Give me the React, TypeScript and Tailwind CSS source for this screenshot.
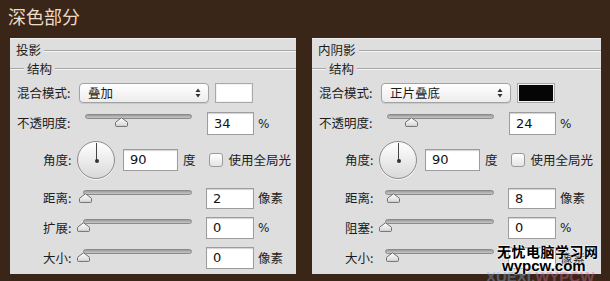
import React from "react";

const CJK = "font-['Noto_Sans_CJK_SC',sans-serif]";
const NUM = "font-['DejaVu_Sans',sans-serif]";

function Thumb() {
  return (
    <svg width="13" height="10" viewBox="0 0 13 10">
      <defs>
        <linearGradient id="tg" x1="0" y1="0" x2="0" y2="1">
          <stop offset="0" stopColor="#ffffff" />
          <stop offset="1" stopColor="#d6d6d6" />
        </linearGradient>
      </defs>
      <path
        d="M6.5 0.8 L12.2 5 Q12.5 5.3 12.5 5.8 L12.5 8.6 Q12.5 9.4 11.7 9.4 L1.3 9.4 Q0.5 9.4 0.5 8.6 L0.5 5.8 Q0.5 5.3 0.8 5 Z"
        fill="url(#tg)"
        stroke="#6f6f6f"
        strokeWidth="1"
      />
    </svg>
  );
}

function Slider({ w, offset }: { w: number; offset: number }) {
  return (
    <div className="relative h-[14px] self-start mt-[1px]" style={{ width: w }}>
      <div className="absolute left-0 right-0 top-[1px] h-[5px] rounded-full border border-[#8a8a8a] bg-[linear-gradient(#9a9a9a,#c8c8c8)]" />
      <div className="absolute top-[4px]" style={{ left: offset - 6.5 }}>
        <Thumb />
      </div>
    </div>
  );
}

function Input({ value, cls }: { value: string; cls: string }) {
  return (
    <div
      className={`${cls} flex items-center border border-[#9d9d9d] bg-white pl-[6px] text-[13px] text-[#111] shadow-[inset_0_1px_1px_rgba(0,0,0,0.18)] ${NUM}`}
    >
      {value}
    </div>
  );
}

function Dial() {
  return (
    <div className="relative h-[38px] w-[38px] rounded-full border border-[#8c8c8c] bg-[linear-gradient(#ffffff,#d9d9d9)] shadow-[0_1px_0_rgba(255,255,255,0.8)]">
      <div className="absolute left-[18px] top-[1px] h-[18px] w-[1px] bg-[#444]" />
      <div className="absolute left-[16.5px] top-[16.5px] h-[4px] w-[4px] rounded-full bg-[#333]" />
    </div>
  );
}

function Header({ title }: { title: string }) {
  return (
    <div className="flex h-[22px] items-center pl-[6px] pt-[1px]">
      <span className={`text-[12.5px] leading-none text-[#1c1c1c] ${CJK}`}>{title}</span>
      <div className="ml-[3px] flex-1 border-t border-b border-t-[#a6a6a6] border-b-[#f4f4f4]" />
    </div>
  );
}

function SubHeader() {
  return (
    <div className="flex h-[16px] items-center">
      <div className="w-[14px] border-t border-b border-t-[#a6a6a6] border-b-[#f4f4f4]" />
      <span className={`ml-[3px] text-[12.5px] leading-none text-[#1c1c1c] ${CJK}`}>结构</span>
      <div className="ml-[3px] flex-1 border-t border-b border-t-[#a6a6a6] border-b-[#f4f4f4]" />
    </div>
  );
}

type PanelProps = {
  width: string;
  title: string;
  mode: string;
  swatch: string;
  opacity: string;
  opacityOffset: number;
  distance: string;
  distanceOffset: number;
  secondLabel: string;
  second: string;
  secondOffset: number;
  size: string;
  sizeOffset: number;
};

function Panel(p: PanelProps) {
  const label = `text-[12.5px] leading-none text-[#1c1c1c] ${CJK}`;
  return (
    <div className={`${p.width} h-[236px] shrink-0 bg-[#dedede] border-t border-t-[#efefef]`}>
      <Header title={p.title} />
      <SubHeader />
      {/* mode */}
      <div className="mt-[6px] flex h-[20px] items-center">
        <div className={`w-[69px] pl-[7px] ${label}`}>混合模式:</div>
        <div className="flex h-[20px] w-[130px] items-center justify-between rounded-[4px] border border-[#a2a2a2] bg-[linear-gradient(#ffffff,#ececec)] pl-[8px] pr-[7px] shadow-[0_1px_1px_rgba(0,0,0,0.1)]">
          <span className={label}>{p.mode}</span>
          <svg width="6" height="10" viewBox="0 0 6 10">
            <path d="M3 0.5 L5.5 4 L0.5 4 Z" fill="#333" />
            <path d="M3 9.5 L5.5 6 L0.5 6 Z" fill="#333" />
          </svg>
        </div>
        <div className="ml-[6px] h-[20px] w-[38px] border border-[#a9a9a9] bg-[#f2f2f2] p-[1px]">
          <div className={`h-full w-full ${p.swatch}`} />
        </div>
      </div>
      {/* opacity */}
      <div className="mt-[9px] flex h-[23px] items-center">
        <div className={`w-[75px] pl-[7px] ${label}`}>不透明度:</div>
        <Slider w={107} offset={p.opacityOffset} />
        <Input value={p.opacity} cls="ml-[15px] h-[23px] w-[47px]" />
        <span className={`ml-[4px] text-[12px] text-[#1c1c1c] ${NUM}`}>%</span>
      </div>
      {/* angle */}
      <div className="mt-[6px] flex h-[38px] items-center">
        <div className={`w-[67px] pl-[33px] ${label}`}>角度:</div>
        <Dial />
        <Input value="90" cls="ml-[8px] h-[22px] w-[55px]" />
        <span className={`ml-[5px] ${label}`}>度</span>
        <div className="ml-[13px] h-[14px] w-[14px] rounded-[3px] border border-[#9a9a9a] bg-[linear-gradient(#ffffff,#e4e4e4)]" />
        <span className={`ml-[6px] ${label}`}>使用全局光</span>
      </div>
      {/* distance */}
      <div className="mt-[9px] flex h-[21px] items-center">
        <div className={`w-[73px] pl-[33px] ${label}`}>距离:</div>
        <Slider w={109} offset={p.distanceOffset} />
        <Input value={p.distance} cls="ml-[14px] h-[21px] w-[48px]" />
        <span className={`ml-[4px] ${label}`}>像素</span>
      </div>
      {/* spread / choke */}
      <div className="mt-[8px] flex h-[22px] items-center">
        <div className={`w-[73px] pl-[33px] ${label}`}>{p.secondLabel}</div>
        <Slider w={109} offset={p.secondOffset} />
        <Input value={p.second} cls="ml-[14px] h-[22px] w-[48px]" />
        <span className={`ml-[4px] text-[12px] text-[#1c1c1c] ${NUM}`}>%</span>
      </div>
      {/* size */}
      <div className="mt-[8px] flex h-[22px] items-center">
        <div className={`w-[73px] pl-[33px] ${label}`}>大小:</div>
        <Slider w={109} offset={p.sizeOffset} />
        <Input value={p.size} cls="ml-[14px] h-[22px] w-[48px]" />
        <span className={`ml-[4px] ${label}`}>像素</span>
      </div>
    </div>
  );
}

export default function App() {
  return (
    <div className="relative h-[281px] w-[610px] overflow-hidden bg-[#3a2618]">
      <div className={`h-[38px] pl-[8px] pt-[3px] text-[18px] leading-[26px] text-[#ecdcc6] ${CJK}`}>
        深色部分
      </div>
      <div className="flex gap-[16px] pl-[10px]">
        <Panel
          width="w-[286px]"
          title="投影"
          mode="叠加"
          swatch="bg-white"
          opacity="34"
          opacityOffset={36}
          distance="2"
          distanceOffset={2.5}
          secondLabel="扩展:"
          second="0"
          secondOffset={0.5}
          size="0"
          sizeOffset={0.5}
        />
        <Panel
          width="w-[289px]"
          title="内阴影"
          mode="正片叠底"
          swatch="bg-[#050505]"
          opacity="24"
          opacityOffset={24}
          distance="8"
          distanceOffset={8}
          secondLabel="阻塞:"
          second="0"
          secondOffset={0.5}
          size=""
          sizeOffset={7}
        />
      </div>
      {/* watermark */}
      <div className="absolute left-[486px] top-[269px] font-['Liberation_Sans',sans-serif] text-[15px] font-bold leading-none opacity-40">
        <span className="text-[#7fb2e6]">XUEXI.</span>
        <span className="text-[#d36ea5]">WYPCW</span>
      </div>
      <div className="absolute left-[497px] top-[244px] flex flex-col items-start">
        <span
          className={`text-[14px] font-bold leading-[15px] tracking-[0.5px] text-black [text-shadow:0_0_2px_#fff,0_0_2px_#fff,0_0_1px_#fff] ${CJK}`}
        >
          无忧电脑学习网
        </span>
        <span className="ml-[5px] font-['Liberation_Sans',sans-serif] text-[15px] font-bold leading-[14px] text-black [text-shadow:0_0_2px_#fff,0_0_2px_#fff,0_0_1px_#fff]">
          wypcw.com
        </span>
      </div>
    </div>
  );
}
